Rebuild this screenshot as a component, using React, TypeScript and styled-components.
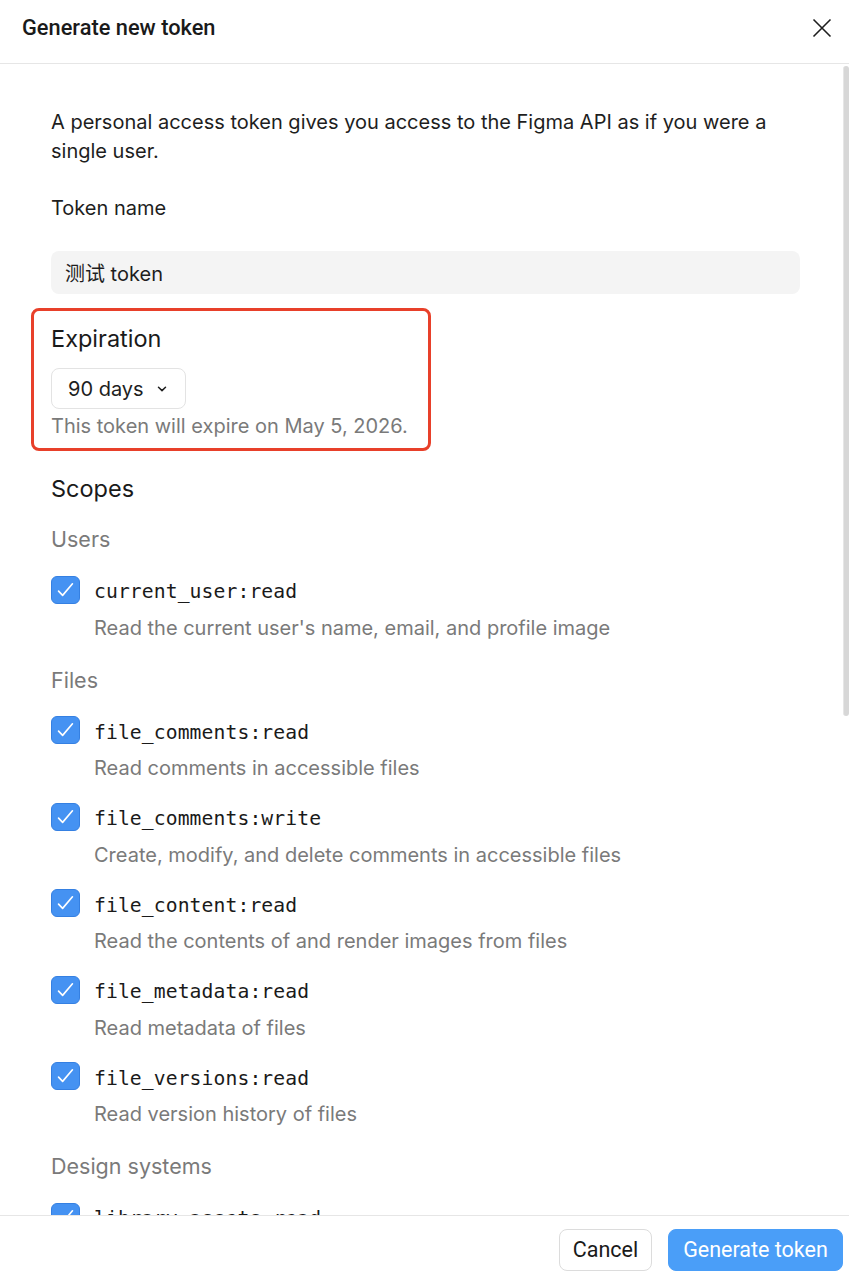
import { createGlobalStyle, styled } from 'styled-components'

const GlobalStyle = createGlobalStyle`
  html, body {
    margin: 0;
    padding: 0;
    background: #ffffff;
  }
  body {
    font-family: Inter, "Noto Sans", "Noto Sans CJK SC", sans-serif;
    color: #1e1e1e;
  }
  * {
    box-sizing: border-box;
  }
`

type Scope = { name: string; desc: string }
type Group = { title: string; scopes: Scope[] }

const groups: Group[] = [
  {
    title: 'Users',
    scopes: [{ name: 'current_user:read', desc: "Read the current user's name, email, and profile image" }],
  },
  {
    title: 'Files',
    scopes: [
      { name: 'file_comments:read', desc: 'Read comments in accessible files' },
      { name: 'file_comments:write', desc: 'Create, modify, and delete comments in accessible files' },
      { name: 'file_content:read', desc: 'Read the contents of and render images from files' },
      { name: 'file_metadata:read', desc: 'Read metadata of files' },
      { name: 'file_versions:read', desc: 'Read version history of files' },
    ],
  },
  {
    title: 'Design systems',
    scopes: [
      { name: 'library_assets:read', desc: 'Read data of individual published components and styles' },
      { name: 'library_content:read', desc: 'Read published components and styles of files' },
      { name: 'team_library_content:read', desc: 'Read published components and styles of teams' },
    ],
  },
  {
    title: 'Development',
    scopes: [
      { name: 'file_dev_resources:read', desc: 'Read dev resources in files' },
      { name: 'file_dev_resources:write', desc: 'Write to dev resources in files' },
    ],
  },
  {
    title: 'Projects',
    scopes: [{ name: 'projects:read', desc: 'List projects and files in projects' }],
  },
  {
    title: 'Webhooks',
    scopes: [
      { name: 'webhooks:read', desc: 'Read metadata of webhooks' },
      { name: 'webhooks:write', desc: 'Create and manage webhooks' },
    ],
  },
]

const CheckIcon = () => (
  <svg width="28" height="28" viewBox="0 0 28 28" fill="none">
    <path d="M6.8 15.2 L11 19.6 L21.2 7.6" stroke="#ffffff" strokeWidth="1.7" strokeLinecap="round" strokeLinejoin="round" />
  </svg>
)

const App = () => {
  return (
    <Dialog>
      <GlobalStyle />
      <Header>
        <Title>Generate new token</Title>
        <CloseButton aria-label="Close">
          <svg width="20" height="20" viewBox="0 0 20 20" fill="none">
            <path d="M1.5 1.5 L18.5 18.5 M18.5 1.5 L1.5 18.5" stroke="#1e1e1e" strokeWidth="1.6" />
          </svg>
        </CloseButton>
      </Header>
      <ScrollArea>
        <Body>
          <Intro>A personal access token gives you access to the Figma API as if you were a single user.</Intro>
          <Label>Token name</Label>
          <NameInput>测试 token</NameInput>
          <Highlight>
            <SectionTitle>Expiration</SectionTitle>
            <SelectButton>
              90 days
              <svg width="10" height="6" viewBox="0 0 10 6" fill="none">
                <path d="M1.5 1.2 L5 4.6 L8.5 1.2" stroke="#1e1e1e" strokeWidth="1.5" strokeLinecap="round" strokeLinejoin="round" />
              </svg>
            </SelectButton>
            <Hint>This token will expire on May 5, 2026.</Hint>
          </Highlight>
          <SectionTitle $top={23}>Scopes</SectionTitle>
          {groups.map((g, gi) => (
            <GroupBlock key={g.title} $first={gi === 0}>
              <GroupTitle>{g.title}</GroupTitle>
              {g.scopes.map((s) => (
                <ScopeItem key={s.name}>
                  <ScopeRow>
                    <Checkbox>
                      <CheckIcon />
                    </Checkbox>
                    <ScopeName>{s.name}</ScopeName>
                  </ScopeRow>
                  <ScopeDesc>{s.desc}</ScopeDesc>
                </ScopeItem>
              ))}
            </GroupBlock>
          ))}
        </Body>
        <ScrollThumb />
      </ScrollArea>
      <Footer>
        <GhostButton>Cancel</GhostButton>
        <PrimaryButton>Generate token</PrimaryButton>
      </Footer>
    </Dialog>
  )
}

const Dialog = styled('div')({
  display: 'flex',
  flexDirection: 'column',
  height: '100vh',
  width: '100%',
  overflow: 'hidden',
  background: '#ffffff',
})

const Header = styled('div')({
  display: 'flex',
  alignItems: 'center',
  justifyContent: 'space-between',
  height: '64px',
  flexShrink: 0,
  padding: '0 15px 8px 22px',
  borderBottom: '1px solid #e6e6e6',
})

const Title = styled('h1')({
  margin: 0,
  fontFamily: 'Roboto, Inter, sans-serif',
  fontSize: '21.8px',
  fontWeight: 500,
  color: '#1a1a1a',
})

const CloseButton = styled('button')({
  display: 'flex',
  alignItems: 'center',
  justifyContent: 'center',
  width: '24px',
  height: '24px',
  padding: 0,
  border: 'none',
  background: 'transparent',
})

const ScrollArea = styled('div')({
  position: 'relative',
  flex: 1,
  minHeight: 0,
  display: 'flex',
  flexDirection: 'column',
})

const ScrollThumb = styled('div')({
  position: 'absolute',
  top: '2px',
  right: '0px',
  width: '6px',
  height: '650px',
  borderRadius: '3px',
  background: '#d7d7d7',
  borderLeft: '1px solid #e6e6e6',
})

const Body = styled('div')({
  flex: 1,
  overflowY: 'auto',
  padding: '44px 49px 48px 51px',
  scrollbarWidth: 'none',
  '&::-webkit-scrollbar': {
    display: 'none',
  },
})

const Intro = styled('p')({
  margin: 0,
  fontSize: '20px',
  lineHeight: '29px',
  color: '#1e1e1e',
})

const Label = styled('div')({
  marginTop: '28px',
  fontSize: '20px',
  lineHeight: '29px',
})

const NameInput = styled('div')({
  marginTop: '28px',
  height: '43px',
  display: 'flex',
  alignItems: 'center',
  padding: '0 14px',
  background: '#f4f4f4',
  borderRadius: '8px',
  fontSize: '20px',
  fontFamily: 'Inter, "Noto Sans CJK SC", sans-serif',
})

const Highlight = styled('div')({
  marginTop: '14px',
  marginLeft: '-20px',
  width: '400px',
  border: '3px solid #e8402a',
  borderRadius: '8px',
  padding: '13px 17px 10px 17px',
})

const SectionTitle = styled('div')<{ $top?: number }>(({ $top }) => ({
  marginTop: `${$top ?? 0}px`,
  fontSize: '23.5px',
  lineHeight: '29px',
  fontWeight: 400,
  color: '#1a1a1a',
}))

const SelectButton = styled('div')({
  marginTop: '15px',
  display: 'flex',
  width: '135px',
  alignItems: 'center',
  justifyContent: 'space-between',
  height: '41px',
  padding: '0 18px 0 16px',
  border: '1px solid #e3e3e3',
  borderRadius: '8px',
  fontSize: '20px',
  color: '#1e1e1e',
  svg: {
    marginTop: '1px',
  },
})

const Hint = styled('div')({
  marginTop: '5px',
  fontSize: '20px',
  lineHeight: '24px',
  color: '#7a7a7a',
})

const GroupBlock = styled('div')<{ $first?: boolean }>(({ $first }) => ({
  marginTop: $first ? '22px' : '26px',
}))

const GroupTitle = styled('div')({
  fontSize: '21.5px',
  lineHeight: '28px',
  color: '#7a7a7a',
})

const ScopeItem = styled('div')({
  marginTop: '22.5px',
})

const ScopeRow = styled('div')({
  display: 'flex',
  alignItems: 'center',
  gap: '14px',
  height: '28px',
})

const Checkbox = styled('span')({
  display: 'flex',
  alignItems: 'center',
  justifyContent: 'center',
  width: '29px',
  height: '28px',
  borderRadius: '6px',
  background: '#4592f2',
  border: '1px solid #3580e2',
  flexShrink: 0,
})

const ScopeName = styled('span')({
  fontFamily: '"DejaVu Sans Mono", "Liberation Mono", monospace',
  fontSize: '19.7px',
  color: '#1a1a1a',
  letterSpacing: '0.1px',
  paddingTop: '4px',
})

const ScopeDesc = styled('div')({
  marginTop: '12px',
  paddingLeft: '43px',
  fontSize: '20px',
  lineHeight: '24px',
  color: '#7a7a7a',
})

const Footer = styled('div')({
  display: 'flex',
  justifyContent: 'flex-end',
  alignItems: 'center',
  gap: '16px',
  height: '65px',
  flexShrink: 0,
  padding: '3px 6px 0 0',
  borderTop: '1px solid #e6e6e6',
})

const BaseButton = styled('button')({
  height: '42px',
  borderRadius: '8px',
  fontFamily: 'Roboto, Inter, sans-serif',
  fontSize: '21.5px',
  padding: '0 10px',
  cursor: 'pointer',
})

const GhostButton = styled(BaseButton)({
  background: '#ffffff',
  border: '1px solid #dcdcdc',
  color: '#1a1a1a',
  width: '93px',
})

const PrimaryButton = styled(BaseButton)({
  background: '#4a9ef8',
  border: '1px solid #4a9ef8',
  color: '#ffffff',
  width: '175px',
})

export default App
